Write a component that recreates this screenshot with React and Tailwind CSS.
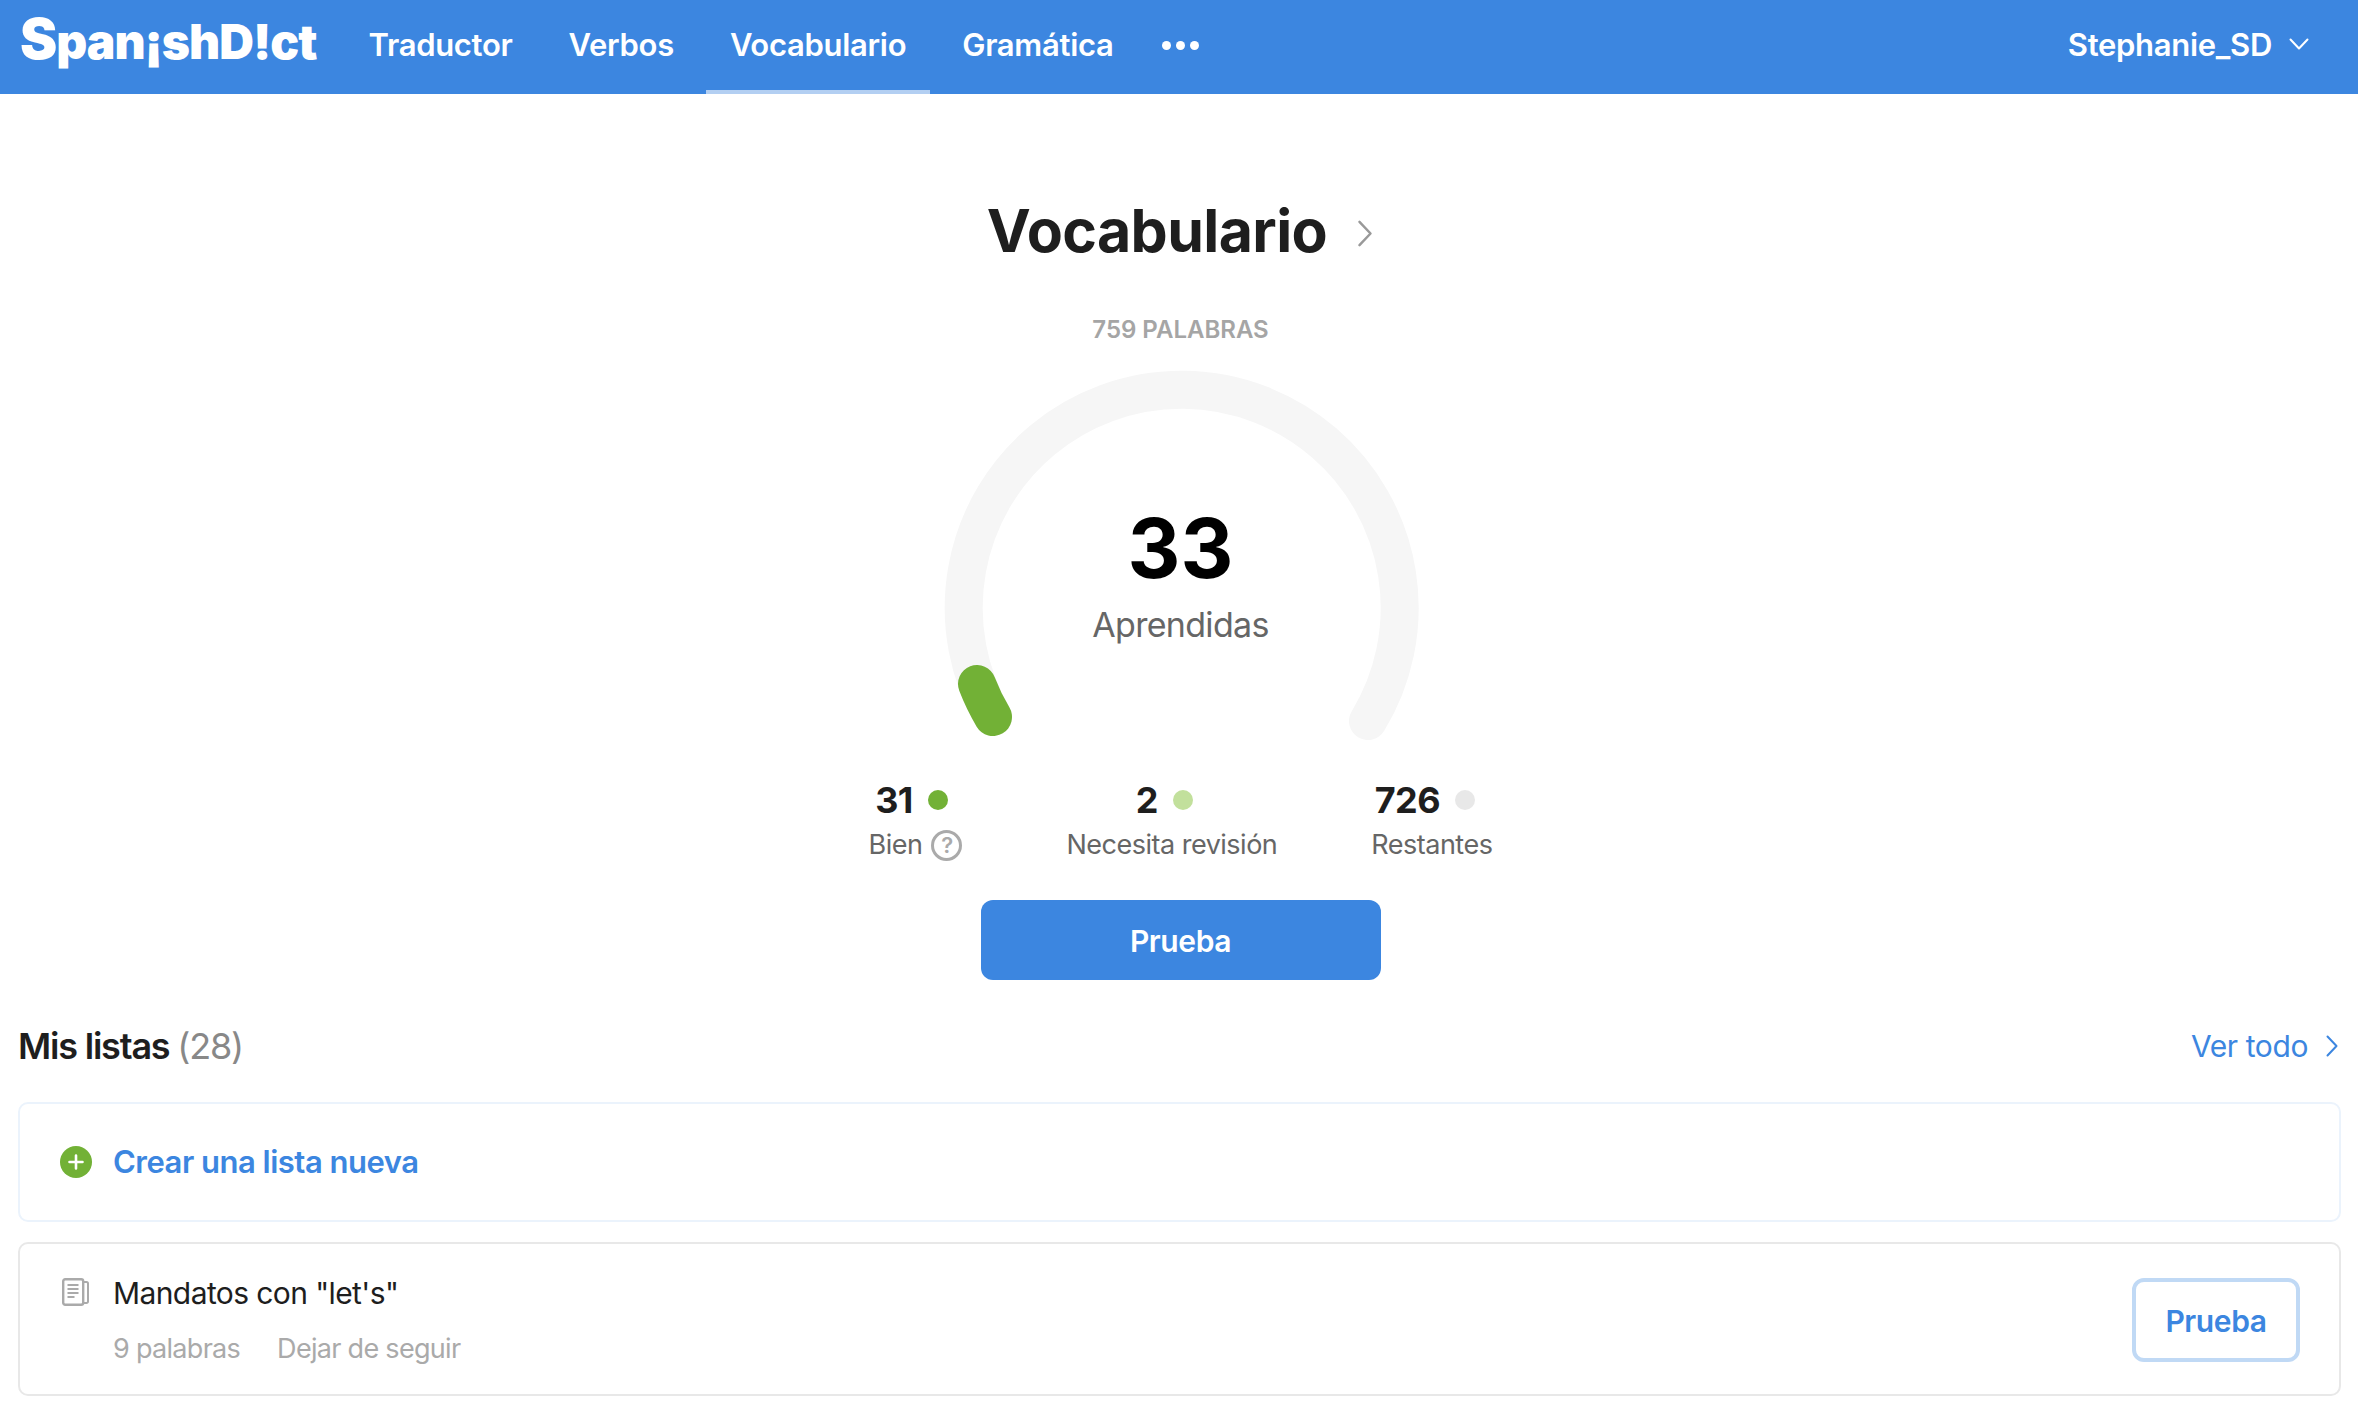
import React from "react";

const Chevron = ({ className }) => (
  <svg viewBox="0 0 12 22" fill="none" stroke="currentColor" strokeWidth="2" strokeLinecap="round" strokeLinejoin="round" className={className}>
    <path d="M1.5 1.5 10.5 11 1.5 20.5" />
  </svg>
);

const Gauge = () => (
  <svg viewBox="930 350 500 400" className="w-[500px] h-[400px] [grid-area:1/1]">
    <path d="M992 718 A218 218 0 1 1 1367 722" fill="none" stroke="#f6f6f6" strokeWidth="38" strokeLinecap="round" />
    <path d="M992 718 A218 218 0 0 1 976 685" fill="none" stroke="#72b136" strokeWidth="38" strokeLinecap="round" />
  </svg>
);

const Stat = ({ value, dot, label, help, className, rowClass }) => (
  <div className={`flex flex-col items-center ${className}`}>
    <div className={`flex items-center gap-[15px] h-[34px] ${rowClass}`}>
      <span className="text-[36px] leading-none font-bold text-[#1e1e1e] tracking-[-0.5px]">{value}</span>
      <span className={`w-5 h-5 rounded-full ${dot}`}></span>
    </div>
    <div className="flex items-center gap-[9px] mt-[11px] h-[34px] text-[27px] text-[#666] tracking-[-0.5px]">
      {label}
      {help && (
        <span className="w-[31px] h-[31px] rounded-full border-[3px] border-[#aaa] text-[#aaa] text-[22px] font-semibold flex items-center justify-center">?</span>
      )}
    </div>
  </div>
);

const App = () => {
  return (
    <div className="font-['Inter',sans-serif] bg-white h-[1410px] overflow-hidden">
      {/* Nav */}
      <div className="h-[94px] bg-[#3c86e0] flex items-stretch text-white pl-5 pr-[49px]">
        <div className="w-[324.5px] pt-[7px] text-[48px] leading-[64px] font-black tracking-[-1px] whitespace-nowrap">
          <span className="text-[56px]">S</span>pan¡shD!ct
        </div>
        <nav className="flex gap-2 text-[31px] font-semibold tracking-[-0.3px]">
          <a className="px-6 flex items-center h-full pb-[3px]">Traductor</a>
          <a className="px-6 flex items-center h-full pb-[3px]">Verbos</a>
          <a className="px-6 flex items-center h-full border-b-4 border-[#b3cff2]">Vocabulario</a>
          <a className="px-6 flex items-center h-full pb-[3px]">Gramática</a>
        </nav>
        <div className="flex items-center gap-[5px] ml-[24px] pb-[3px]">
          <span className="w-[9px] h-[9px] rounded-full bg-white"></span>
          <span className="w-[9px] h-[9px] rounded-full bg-white"></span>
          <span className="w-[9px] h-[9px] rounded-full bg-white"></span>
        </div>
        <div className="ml-auto flex items-center gap-[17px] text-[31px] font-semibold tracking-[-0.3px] pb-[3px]">
          Stephanie_SD
          <svg viewBox="0 0 20 12" fill="none" stroke="currentColor" strokeWidth="2" strokeLinecap="round" strokeLinejoin="round" className="w-5 h-3 mb-[3px]">
            <path d="M1.5 1.5 10 10.5 18.5 1.5" />
          </svg>
        </div>
      </div>

      {/* Summary */}
      <div className="flex flex-col items-center pl-[3px]">
        <div className="mt-[94px] h-[84px] flex items-center gap-[29px]">
          <h1 className="text-[59px] leading-none font-bold text-[#1e1e1e] tracking-[-0.6px]">Vocabulario</h1>
          <Chevron className="w-[18px] h-[27px] mt-[6px] text-[#999]" />
        </div>
        <div className="mt-[44px] text-[24px] leading-[28px] font-semibold text-[#a5a5a5]">759 PALABRAS</div>
        <div className="grid mt-[5px] w-[500px] h-[400px]">
          <Gauge />
          <div className="[grid-area:1/1] flex flex-col items-center pt-[155px]">
            <div className="text-[82px] leading-[90px] font-bold text-black">33</div>
            <div className="text-[34px] leading-[44px] text-[#666] tracking-[-0.7px] mt-[9px]">Aprendidas</div>
          </div>
        </div>
        <div className="h-[90px] mt-[34px] flex justify-center">
          <Stat value="31" dot="bg-[#72b136]" label="Bien" help rowClass="pr-[8px]" />
          <Stat value="2" dot="bg-[#c2e09c]" label="Necesita revisión" className="ml-[104px]" rowClass="pr-[15px]" />
          <Stat value="726" dot="bg-[#e8e8e8]" label="Restantes" className="ml-[94px]" rowClass="pr-[14px]" />
        </div>
        <button className="w-[400px] h-20 mt-[27px] pt-[2px] rounded-xl bg-[#3c86e0] text-white text-[30px] font-semibold tracking-[-0.4px]">Prueba</button>
      </div>

      {/* Lists */}
      <div className="px-[18px] pr-[17px]">
        <div className="flex items-center justify-between mt-[44px] h-[44px]">
          <div className="text-[36px] font-semibold text-[#1e1e1e] tracking-[-1.2px]">
            Mis listas <span className="font-normal text-[#888]">(28)</span>
          </div>
          <div className="flex items-center gap-[18px] text-[30px] text-[#3c86e0] tracking-[-0.4px] pr-[3px]">
            Ver todo
            <Chevron className="w-3 h-[22px]" />
          </div>
        </div>
        <div className="mt-[34px] h-[120px] border-2 border-[#ebf3fc] rounded-[10px] flex items-center pl-[40px]">
          <svg viewBox="0 0 32 32" className="w-8 h-8">
            <circle cx="16" cy="16" r="16" fill="#72b136" />
            <path d="M16 9.5v13M9.5 16h13" stroke="#fff" strokeWidth="2.6" strokeLinecap="round" />
          </svg>
          <span className="ml-[21px] text-[31px] font-semibold text-[#3c86e0] tracking-[-0.5px]">Crear una lista nueva</span>
        </div>
        <div className="mt-[20px] h-[154px] border-2 border-[#e8e8e8] rounded-[10px] flex items-center justify-between pl-[42px] pr-[39px]">
          <div className="flex gap-[24px] self-start pt-[33px]">
            <svg viewBox="0 0 27 28" fill="none" stroke="#aaa" className="w-[27px] h-7 mt-[1px]">
              <rect x="1.2" y="1.2" width="20" height="25.6" rx="2" strokeWidth="2.4" />
              <path d="M22 4h2.5a1.5 1.5 0 0 1 1.5 1.5v18a1.5 1.5 0 0 1-1.5 1.5H22" strokeWidth="2" />
              <path d="M5.5 7h11M5.5 11h11M5.5 15h11M5.5 19h7" strokeWidth="1.8" />
            </svg>
            <div className="-mt-[3px]">
              <div className="text-[30px] leading-[38px] text-[#1e1e1e] tracking-[-0.6px]">Mandatos con "let's"</div>
              <div className="flex gap-[37px] mt-[19px] text-[27px] leading-[36px] text-[#aaa] tracking-[-0.7px]">
                <span>9 palabras</span>
                <span>Dejar de seguir</span>
              </div>
            </div>
          </div>
          <button className="w-[168px] h-[84px] mt-[2px] pt-[2px] border-4 border-[#c0d9f5] rounded-xl text-[30px] font-semibold text-[#3c86e0] tracking-[-0.4px]">Prueba</button>
        </div>
      </div>
    </div>
  );
};

export default App;
